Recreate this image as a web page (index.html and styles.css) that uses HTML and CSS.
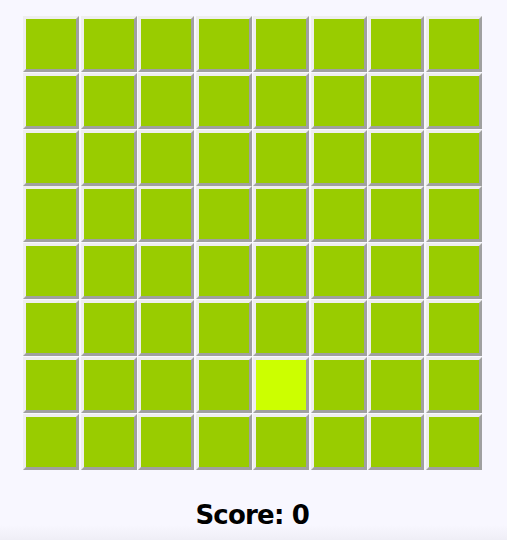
FILE: index.html
```html
<!DOCTYPE html>
<html>
<head>
<meta charset="utf-8">
<link rel="stylesheet" href="styles.css">
</head>
<body>
<div class="game">
  <div class="board">
    <div class="cell"></div><div class="cell"></div><div class="cell"></div><div class="cell"></div><div class="cell"></div><div class="cell"></div><div class="cell"></div><div class="cell"></div>
    <div class="cell"></div><div class="cell"></div><div class="cell"></div><div class="cell"></div><div class="cell"></div><div class="cell"></div><div class="cell"></div><div class="cell"></div>
    <div class="cell"></div><div class="cell"></div><div class="cell"></div><div class="cell"></div><div class="cell"></div><div class="cell"></div><div class="cell"></div><div class="cell"></div>
    <div class="cell"></div><div class="cell"></div><div class="cell"></div><div class="cell"></div><div class="cell"></div><div class="cell"></div><div class="cell"></div><div class="cell"></div>
    <div class="cell"></div><div class="cell"></div><div class="cell"></div><div class="cell"></div><div class="cell"></div><div class="cell"></div><div class="cell"></div><div class="cell"></div>
    <div class="cell"></div><div class="cell"></div><div class="cell"></div><div class="cell"></div><div class="cell"></div><div class="cell"></div><div class="cell"></div><div class="cell"></div>
    <div class="cell"></div><div class="cell"></div><div class="cell"></div><div class="cell"></div><div class="cell lit"></div><div class="cell"></div><div class="cell"></div><div class="cell"></div>
    <div class="cell"></div><div class="cell"></div><div class="cell"></div><div class="cell"></div><div class="cell"></div><div class="cell"></div><div class="cell"></div><div class="cell"></div>
  </div>
  <div class="score">Score: 0</div>
</div>
</body>
</html>
```
FILE: styles.css
```css
html, body {
  margin: 0;
  padding: 0;
}
body {
  width: 507px;
  height: 540px;
  background: linear-gradient(to bottom, #f8f7ff 0, #f8f7ff 525px, #efeef6 540px);
  overflow: hidden;
}
.game {
  padding: 16px 0 0 23px;
  width: 458.5px;
}
.board {
  display: grid;
  grid-template-columns: repeat(8, 56px);
  grid-auto-rows: 56px;
  column-gap: 1.5px;
  row-gap: 0.8px;
}
.cell {
  box-sizing: border-box;
  background: #99cc00;
  border: 3px solid;
  border-color: #eeeeee #a0a0a0 #a0a0a0 #eeeeee;
}
.cell.lit {
  background: #ccff00;
}
.score {
  margin-top: 30px;
  text-align: center;
  font-family: "DejaVu Sans", sans-serif;
  font-weight: bold;
  font-size: 26px;
  letter-spacing: -0.8px;
  color: #000;
}
```
